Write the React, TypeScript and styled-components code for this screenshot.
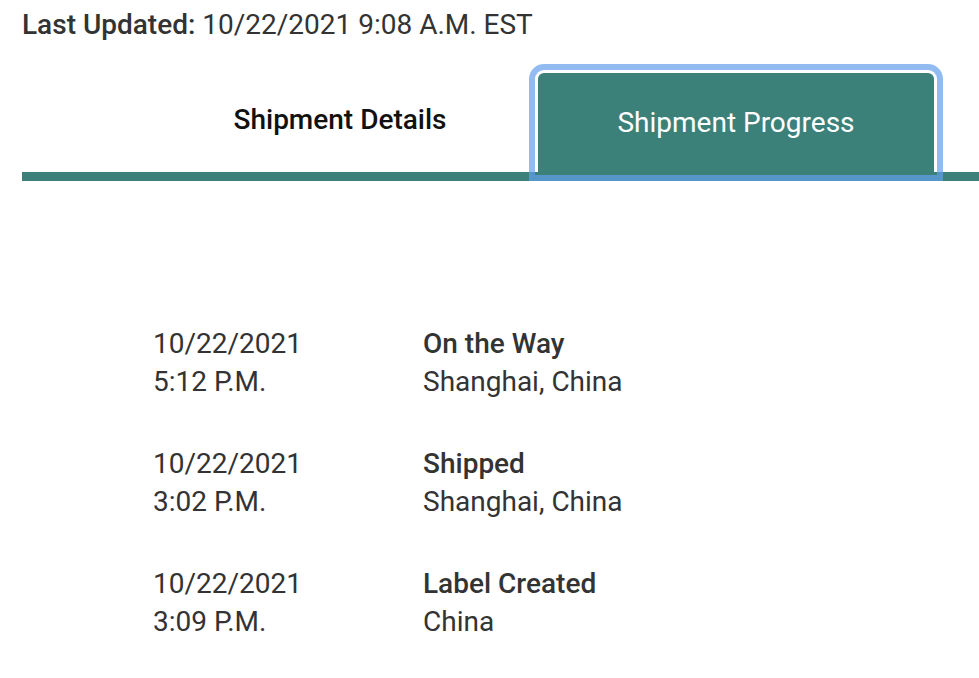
import React from 'react';
import styled, { createGlobalStyle } from 'styled-components';

const GlobalStyle = createGlobalStyle`
  body {
    margin: 0;
    background: #fff;
    font-family: Roboto, "Liberation Sans", sans-serif;
    color: #333;
  }
`;

const teal = '#3b8179';

const Page = styled.div`
  width: 979px;
  height: 678px;
  overflow: hidden;
`;

const Updated = styled.div`
  padding: 6px 0 0 22px;
  font-size: 28px;
  line-height: 38px;
  color: #333;
  strong {
    font-weight: 500;
  }
`;

// 탭
const TabRow = styled.div`
  display: flex;
  margin: 29px 0 0 22px;
  padding-left: 120px;
  border-bottom: 9px solid ${teal};
`;

const Tab = styled.button<{ $active?: boolean }>`
  width: 396px;
  height: 99px;
  border: none;
  border-radius: 6px 6px 0 0;
  padding: 0 0 ${(p) => (p.$active ? '0' : '6px')};
  font-family: inherit;
  font-size: 28px;
  font-weight: ${(p) => (p.$active ? 400 : 500)};
  background: ${(p) => (p.$active ? teal : 'transparent')};
  color: ${(p) => (p.$active ? '#fff' : '#111')};
  outline: ${(p) => (p.$active ? '6px solid rgba(100, 160, 235, 0.7)' : 'none')};
  outline-offset: 3px;
  cursor: pointer;
`;

// 타임라인
const Timeline = styled.div`
  display: flex;
  flex-direction: column;
  gap: 44px;
  padding: 144px 0 0 153px;
`;

const Row = styled.div`
  display: grid;
  grid-template-columns: 270px auto;
  font-size: 28px;
  line-height: 38px;
  color: #333;
`;

const Col = styled.div`
  display: flex;
  flex-direction: column;
`;

const Status = styled.span`
  font-weight: 500;
`;

const events = [
  { date: '10/22/2021', time: '5:12 P.M.', status: 'On the Way', place: 'Shanghai, China' },
  { date: '10/22/2021', time: '3:02 P.M.', status: 'Shipped', place: 'Shanghai, China' },
  { date: '10/22/2021', time: '3:09 P.M.', status: 'Label Created', place: 'China' },
];

const App = () => (
  <Page>
    <GlobalStyle />
    <Updated>
      <strong>Last Updated:</strong> 10/22/2021 9:08 A.M. EST
    </Updated>
    <TabRow>
      <Tab>Shipment Details</Tab>
      <Tab $active>Shipment Progress</Tab>
    </TabRow>
    <Timeline>
      {events.map((e) => (
        <Row key={e.status}>
          <Col>
            <span>{e.date}</span>
            <span>{e.time}</span>
          </Col>
          <Col>
            <Status>{e.status}</Status>
            <span>{e.place}</span>
          </Col>
        </Row>
      ))}
    </Timeline>
  </Page>
);

export default App;
